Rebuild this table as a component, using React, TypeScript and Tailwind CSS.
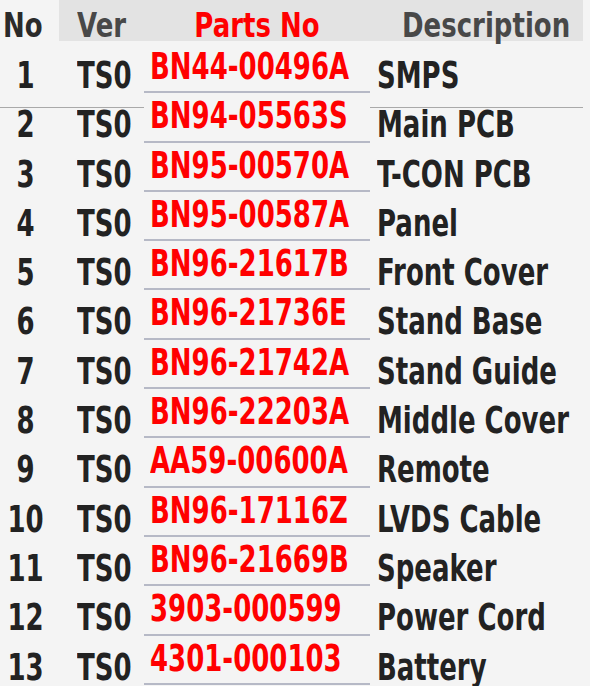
const parts = [
  { no: '1', ver: 'TS0', code: 'BN44-00496A', desc: 'SMPS' },
  { no: '2', ver: 'TS0', code: 'BN94-05563S', desc: 'Main PCB' },
  { no: '3', ver: 'TS0', code: 'BN95-00570A', desc: 'T-CON PCB' },
  { no: '4', ver: 'TS0', code: 'BN95-00587A', desc: 'Panel' },
  { no: '5', ver: 'TS0', code: 'BN96-21617B', desc: 'Front Cover' },
  { no: '6', ver: 'TS0', code: 'BN96-21736E', desc: 'Stand Base' },
  { no: '7', ver: 'TS0', code: 'BN96-21742A', desc: 'Stand Guide' },
  { no: '8', ver: 'TS0', code: 'BN96-22203A', desc: 'Middle Cover' },
  { no: '9', ver: 'TS0', code: 'AA59-00600A', desc: 'Remote' },
  { no: '10', ver: 'TS0', code: 'BN96-17116Z', desc: 'LVDS Cable' },
  { no: '11', ver: 'TS0', code: 'BN96-21669B', desc: 'Speaker' },
  { no: '12', ver: 'TS0', code: '3903-000599', desc: 'Power Cord' },
  { no: '13', ver: 'TS0', code: '4301-000103', desc: 'Battery' },
]

function Txt({ children, header }: { children: React.ReactNode; header?: boolean }) {
  return (
    <span
      className={`inline-block align-top leading-none whitespace-nowrap ${header ? 'scale-y-[1.3]' : 'scale-y-[1.4]'}`}
    >
      {children}
    </span>
  )
}

export default function App() {
  return (
    <div className="w-[590px] h-[686px] overflow-hidden bg-[#f4f4f4] font-['DejaVu_Sans',sans-serif] font-bold text-[26px] leading-none">
      {/* header */}
      <div className="flex h-[44px]">
        <div className="w-[59px] pl-[3px] pt-[12px] text-[#2a2a2a]">
          <Txt header>No</Txt>
        </div>
        <div className="w-[524px] h-[41px] bg-[#e3e3e3] grid grid-cols-[85px_226px_1fr] pt-[12px]">
          <div className="pl-[18px] text-[#484848]">
            <Txt header>Ver</Txt>
          </div>
          <div className="text-center text-[#f00]">
            <Txt header>Parts No</Txt>
          </div>
          <div className="pl-[32px] text-[#484848]">
            <Txt header>Description</Txt>
          </div>
        </div>
      </div>

      {/* rows */}
      <div className="flex flex-col">
        {parts.map((p, i) => (
          <div key={p.no} className="relative grid grid-cols-[51px_93px_226px_1fr] h-[49.3px] text-[#222]">
            {i === 1 && (
              <div className="absolute left-0 top-[14px] w-[583px] h-px bg-[#a9a9a9]"></div>
            )}
            <div className="text-center pt-[18px]">
              <Txt>{p.no}</Txt>
            </div>
            <div className="pl-[26px] pt-[18px]">
              <Txt>{p.ver}</Txt>
            </div>
            <div className="relative z-10 bg-[#f4f4f4] border-b-2 border-[#b6b9c6] pl-[6px] pt-[9px] text-[#f00]">
              <Txt>{p.code}</Txt>
            </div>
            <div className="pl-[7px] pt-[18px]">
              <Txt>{p.desc}</Txt>
            </div>
          </div>
        ))}
      </div>
    </div>
  )
}
